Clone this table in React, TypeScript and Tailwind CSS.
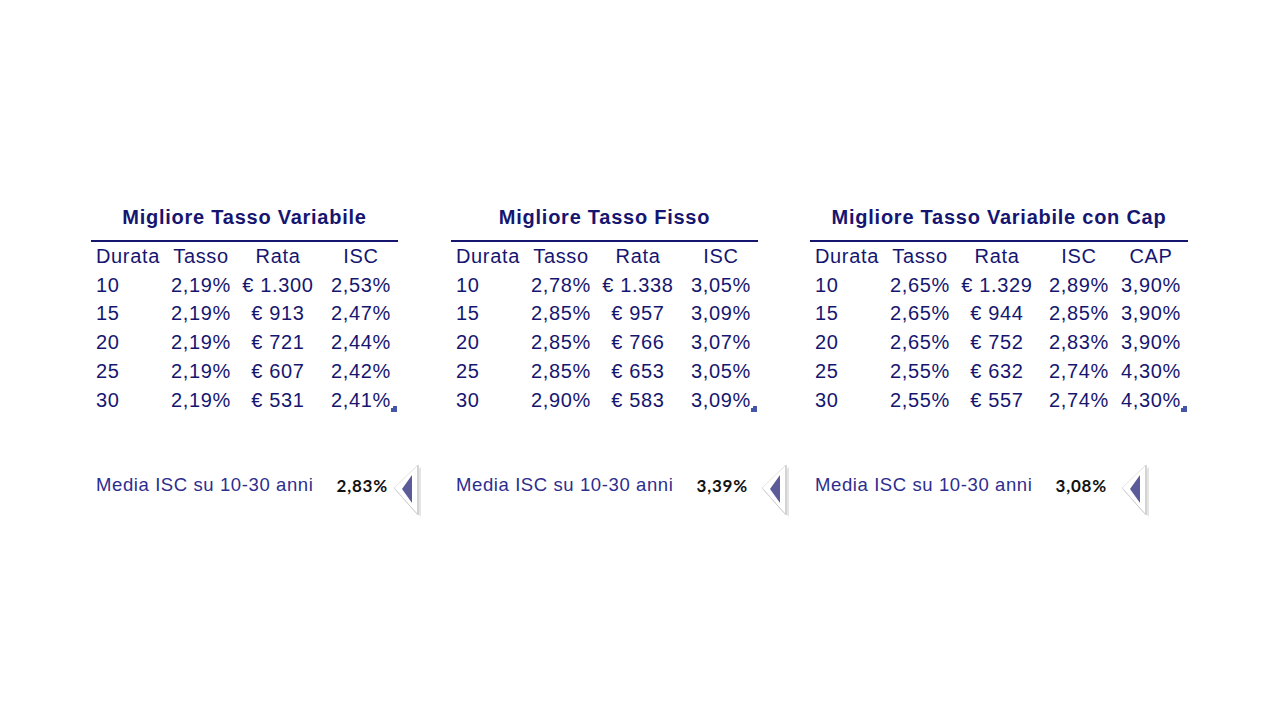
import React from 'react';

type Row = string[];

interface RateTableProps {
  title: string;
  headers: string[];
  rows: Row[];
  cols: string;
  width: string;
  media: string;
  arrowGap: string;
}

const navy = 'text-[#161670]';

// left-pointing bevelled arrow, as in the source spreadsheet
const BevelArrow: React.FC = () => (
  <svg width="30" height="54" viewBox="0 0 30 54" className="block">
    <polygon points="2,26 27,3 27,53" fill="#cfcfcf" opacity="0.55" />
    <polygon points="0,24 24,1 24,51" fill="#ffffff" stroke="#e2e2e2" strokeWidth="1" />
    <line x1="24" y1="1" x2="24" y2="51" stroke="#c4c4c4" strokeWidth="1.2" />
    <line x1="0.5" y1="24.5" x2="24" y2="51" stroke="#d0d0d0" strokeWidth="1" />
    <polygon points="8,25 18,11 18,39" fill="#5b5b9a" />
  </svg>
);

const RateTable: React.FC<RateTableProps> = ({ title, headers, rows, cols, width, media, arrowGap }) => {
  return (
    <div className={`${width} shrink-0`}>
      <div className={`text-center font-bold text-[20px] leading-[28px] tracking-[0.75px] ${navy}`}>{title}</div>
      <div className="mt-[9px] h-[2px] bg-[#161670]" />

      <div className="relative">
        <div className={`grid ${cols} text-[20px] leading-[28.7px] tracking-[0.65px] ${navy}`}>
          {headers.map((h, i) => (
            <div key={h} className={i === 0 ? 'pl-[5px] whitespace-nowrap' : 'text-center whitespace-nowrap'}>{h}</div>
          ))}
          {rows.map((r) =>
            r.map((cell, i) => (
              <div key={r[0] + '-' + i} className={i === 0 ? 'pl-[5px] whitespace-nowrap' : 'text-center whitespace-nowrap'}>
                {cell}
              </div>
            ))
          )}
        </div>
        {/* fill handle */}
        <div className="absolute right-[1px] bottom-[2px] w-[6px] h-[6px] bg-[#4556a8]">
          <div className="w-[2px] h-[2px] bg-white" />
        </div>
      </div>

      <div className="mt-[50px] flex items-start">
        <div className="w-[297px] shrink-0 flex justify-between items-start">
          <span className="mt-[9.6px] pl-[5px] text-[18.5px] leading-[22px] tracking-[0.6px] text-[#2d2d8e] whitespace-nowrap">
            Media ISC su 10-30 anni
          </span>
          <span className="mt-[10.7px] font-['Lato',sans-serif] font-bold text-[17px] leading-[22px] tracking-[0.8px] text-[#111111] whitespace-nowrap">
            {media}
          </span>
        </div>
        <div className={`${arrowGap} shrink-0`}>
          <BevelArrow />
        </div>
      </div>
    </div>
  );
};

const App: React.FC = () => {
  return (
    <div className="w-[1280px] h-[720px] bg-white overflow-hidden font-['Liberation_Sans',Arial,sans-serif]">
      <div className="flex items-start pt-[203px] pl-[91px]">
        <RateTable
          title="Migliore Tasso Variabile"
          headers={['Durata', 'Tasso', 'Rata', 'ISC']}
          rows={[
            ['10', '2,19%', '€ 1.300', '2,53%'],
            ['15', '2,19%', '€ 913', '2,47%'],
            ['20', '2,19%', '€ 721', '2,44%'],
            ['25', '2,19%', '€ 607', '2,42%'],
            ['30', '2,19%', '€ 531', '2,41%'],
          ]}
          cols="grid-cols-[75px_70px_84px_82px]"
          width="w-[307px]"
          media="2,83%"
          arrowGap="ml-[6px]"
        />

        <div className="ml-[53px]">
          <RateTable
            title="Migliore Tasso Fisso"
            headers={['Durata', 'Tasso', 'Rata', 'ISC']}
            rows={[
              ['10', '2,78%', '€ 1.338', '3,05%'],
              ['15', '2,85%', '€ 957', '3,09%'],
              ['20', '2,85%', '€ 766', '3,07%'],
              ['25', '2,85%', '€ 653', '3,05%'],
              ['30', '2,90%', '€ 583', '3,09%'],
            ]}
            cols="grid-cols-[75px_70px_84px_82px]"
            width="w-[307px]"
            media="3,39%"
            arrowGap="ml-[14px]"
          />
        </div>

        <div className="ml-[52px]">
          <RateTable
            title="Migliore Tasso Variabile con Cap"
            headers={['Durata', 'Tasso', 'Rata', 'ISC', 'CAP']}
            rows={[
              ['10', '2,65%', '€ 1.329', '2,89%', '3,90%'],
              ['15', '2,65%', '€ 944', '2,85%', '3,90%'],
              ['20', '2,65%', '€ 752', '2,83%', '3,90%'],
              ['25', '2,55%', '€ 632', '2,74%', '4,30%'],
              ['30', '2,55%', '€ 557', '2,74%', '4,30%'],
            ]}
            cols="grid-cols-[75px_70px_84px_80px_64px]"
            width="w-[378px]"
            media="3,08%"
            arrowGap="ml-[15px]"
          />
        </div>
      </div>
    </div>
  );
};

export default App;
